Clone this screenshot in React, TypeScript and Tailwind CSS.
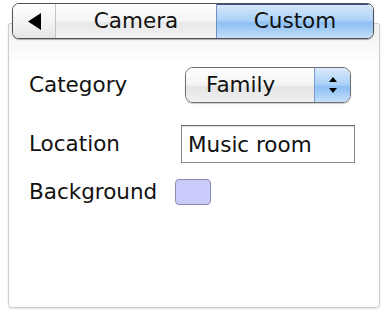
import React, { useState } from "react";

const font = { fontFamily: '"DejaVu Sans", "Liberation Sans", sans-serif' };

const App = () => {
	const [tab, setTab] = useState("custom");
	const [location, setLocation] = useState("Music room");

	return (
		<div className="w-[389px] h-[320px] bg-white pt-[23px] pl-[8px]" style={font}>
			<div className="w-[372px] h-[285px] border border-[#cdcdcd] rounded-b-[4px] rounded-t-[2px] shadow-[0_1px_2px_rgba(0,0,0,0.12)] bg-[linear-gradient(to_bottom,#efefef_0px,#ffffff_40px)]">
				{/* segmented control */}
				<div className="-mt-[21px] ml-[3px] w-[362px] h-[36px] flex rounded-[7px] border border-[#4f4f4f] overflow-hidden shadow-[0_1px_1px_rgba(0,0,0,0.3)] text-[21.5px] leading-none text-[#111]">
					<button className="w-[43px] h-full flex items-center justify-center bg-[linear-gradient(to_bottom,#ffffff,#f4f4f4_50%,#e6e6e6)] border-r border-[#c4c4c4]">
						<svg width="13" height="17" viewBox="0 0 13 17">
							<path d="M0 8.5 L13 0 L13 17 Z" fill="#000" />
						</svg>
					</button>
					<button
						onClick={() => setTab("camera")}
						className={
							tab === "camera"
								? "w-[160px] h-full flex items-center justify-center bg-[linear-gradient(to_bottom,#dcebfb,#a9d0f7_50%,#8dc0f3_55%,#c3e0fa)]"
								: "w-[160px] h-full flex items-center justify-center bg-[linear-gradient(to_bottom,#ffffff,#f4f4f4_50%,#e8e8e8_55%,#f2f2f2)]"
						}>
						Camera
					</button>
					<button
						onClick={() => setTab("custom")}
						className={
							tab === "custom"
								? "flex-1 h-full flex items-center justify-center bg-[linear-gradient(to_bottom,#d9e9fb,#a9d0f7_50%,#8cbff3_55%,#c2dff9)] border-l border-[#6f8fc4] shadow-[inset_0_1px_0_#3a4d9e]"
								: "flex-1 h-full flex items-center justify-center bg-[linear-gradient(to_bottom,#ffffff,#f4f4f4_50%,#e8e8e8_55%,#f2f2f2)] border-l border-[#c4c4c4]"
						}>
						Custom
					</button>
				</div>

				<div className="pl-[20px] pt-[28px] flex flex-col text-[21.5px] leading-none text-[#111]">
					<div className="flex items-center h-[36px]">
						<span className="w-[156px]">Category</span>
						<div className="w-[166px] h-[36px] flex rounded-[8px] border border-[#6e6e6e] overflow-hidden shadow-[0_1px_1px_rgba(0,0,0,0.2)]">
							<div className="flex-1 flex items-center pl-[20px] bg-[linear-gradient(to_bottom,#ffffff,#f3f3f3_50%,#e4e4e4_55%,#f0f0f0)]">
								Family
							</div>
							<div className="w-[36px] flex flex-col items-center justify-center gap-[6px] border-l border-[#7b9ccc] bg-[linear-gradient(to_bottom,#d9e9fb,#a9d0f7_50%,#8cbff3_55%,#c2dff9)]">
								<svg width="8" height="5" viewBox="0 0 8 5">
									<path d="M4 0 L8 5 L0 5 Z" fill="#000" />
								</svg>
								<svg width="8" height="5" viewBox="0 0 8 5">
									<path d="M0 0 L8 0 L4 5 Z" fill="#000" />
								</svg>
							</div>
						</div>
					</div>

					<div className="flex items-center h-[38px] mt-[22px]">
						<span className="w-[152px]">Location</span>
						<input
							value={location}
							onChange={(e) => setLocation(e.target.value)}
							className="w-[174px] h-[38px] border border-[#8a8a8a] border-t-[#6a6a6a] px-[6px] text-[21.5px] text-[#111] outline-none bg-white shadow-[inset_0_1px_1px_rgba(0,0,0,0.15)]"
							style={font}
						/>
					</div>

					<div className="flex items-center h-[26px] mt-[16px]">
						<span className="w-[146px]">Background</span>
						<div className="w-[36px] h-[26px] rounded-[4px] border border-[#8c8caf] bg-[#cbcbfb]" />
					</div>
				</div>
			</div>
		</div>
	);
};

export default App;
